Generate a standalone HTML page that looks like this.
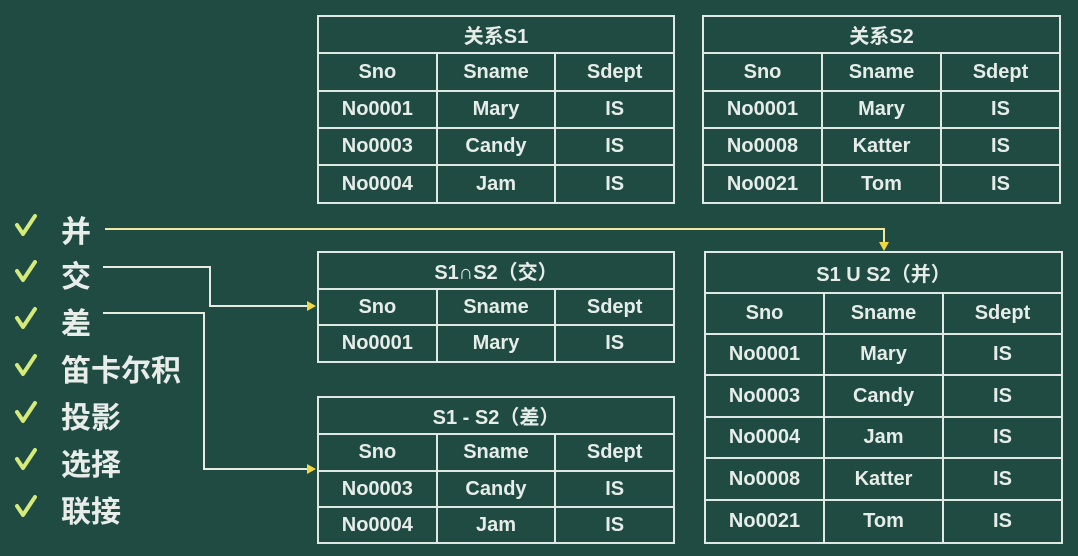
<!DOCTYPE html>
<html><head><meta charset="utf-8"><style>
body{margin:0;width:1078px;height:556px;background:#1f4b43;overflow:hidden;position:relative;font-family:"Liberation Sans","Noto Sans CJK SC",sans-serif;color:#eef2ee}
table{position:absolute;border-collapse:collapse;table-layout:fixed}
td{border:2px solid #dfe8e2;text-align:center;font-size:20px;padding:0;font-weight:bold;color:#e6ece8}
.cn{position:absolute;left:61px;font-size:30px;font-weight:bold;color:#e8ede9;font-family:"Noto Sans CJK SC",sans-serif;line-height:40px}
</style></head><body>
<table style="left:317px;top:15px;width:358px"><tr style="height:37px"><td colspan=3>关系S1</td></tr>
<tr style="height:38px"><td>Sno</td><td>Sname</td><td>Sdept</td></tr>
<tr style="height:37px"><td>No0001</td><td>Mary</td><td>IS</td></tr>
<tr style="height:37px"><td>No0003</td><td>Candy</td><td>IS</td></tr>
<tr style="height:38px"><td>No0004</td><td>Jam</td><td>IS</td></tr></table>
<table style="left:702px;top:15px;width:359px"><tr style="height:37px"><td colspan=3>关系S2</td></tr>
<tr style="height:38px"><td>Sno</td><td>Sname</td><td>Sdept</td></tr>
<tr style="height:37px"><td>No0001</td><td>Mary</td><td>IS</td></tr>
<tr style="height:37px"><td>No0008</td><td>Katter</td><td>IS</td></tr>
<tr style="height:38px"><td>No0021</td><td>Tom</td><td>IS</td></tr></table>
<table style="left:317px;top:251px;width:358px"><tr style="height:37px"><td colspan=3>S1∩S2（交）</td></tr>
<tr style="height:36px"><td>Sno</td><td>Sname</td><td>Sdept</td></tr>
<tr style="height:37px"><td>No0001</td><td>Mary</td><td>IS</td></tr></table>
<table style="left:317px;top:396px;width:358px"><tr style="height:37px"><td colspan=3>S1 - S2（差）</td></tr>
<tr style="height:37px"><td>Sno</td><td>Sname</td><td>Sdept</td></tr>
<tr style="height:36px"><td>No0003</td><td>Candy</td><td>IS</td></tr>
<tr style="height:36px"><td>No0004</td><td>Jam</td><td>IS</td></tr></table>
<table style="left:704px;top:251px;width:359px"><tr style="height:41px"><td colspan=3>S1 U S2（并）</td></tr>
<tr style="height:41px"><td>Sno</td><td>Sname</td><td>Sdept</td></tr>
<tr style="height:41px"><td>No0001</td><td>Mary</td><td>IS</td></tr>
<tr style="height:42px"><td>No0003</td><td>Candy</td><td>IS</td></tr>
<tr style="height:41px"><td>No0004</td><td>Jam</td><td>IS</td></tr>
<tr style="height:42px"><td>No0008</td><td>Katter</td><td>IS</td></tr>
<tr style="height:43px"><td>No0021</td><td>Tom</td><td>IS</td></tr></table>
<svg style="position:absolute;left:0;top:0" width="1078" height="556">
<g fill="none" stroke-width="2">
<polyline points="105,229 884,229 884,244" stroke="#f0e8a0"/>
<polyline points="103,267 210,267 210,306 308,306" stroke="#e8ece0"/>
<polyline points="103,313 204,313 204,469 308,469" stroke="#e8ece0"/>
</g>
<polygon points="879,242 889,242 884,251" fill="#f0d840"/>
<polygon points="307,301 316,306 307,311" fill="#f0d840"/>
<polygon points="307,464 316,469 307,474" fill="#f0d840"/>
<g fill="none" stroke="#d6ea7a" stroke-width="4" stroke-linecap="round" stroke-linejoin="round">
<path d="M17,225 L23,234 L35,216"/>
<path d="M17,271 L23,280 L35,262"/>
<path d="M17,318 L23,327 L35,309"/>
<path d="M17,365 L23,374 L35,356"/>
<path d="M17,412 L23,421 L35,403"/>
<path d="M17,459 L23,468 L35,450"/>
<path d="M17,506 L23,515 L35,497"/>
</g>
</svg>
<div class="cn" style="top:209px">并</div>
<div class="cn" style="top:254px">交</div>
<div class="cn" style="top:301px">差</div>
<div class="cn" style="top:348px">笛卡尔积</div>
<div class="cn" style="top:395px">投影</div>
<div class="cn" style="top:442px">选择</div>
<div class="cn" style="top:489px">联接</div>
</body></html>
